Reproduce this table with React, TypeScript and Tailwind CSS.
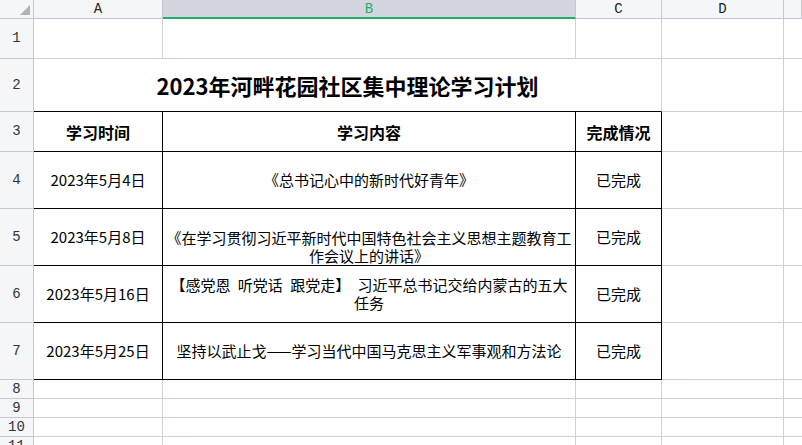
import React from 'react';

const grid = 'border-r border-b border-[#cdd1dc]';
const black = 'border-r border-b border-black';

const colHeads = ['A', 'B', 'C', 'D', ''];

function RowHead({ n }: { n: number }) {
  return (
    <div className="flex items-center justify-center border-r border-b border-[#c4c8d4] bg-[#f5f6f8] text-[14px] text-[#333] [font-family:'Liberation_Mono',monospace]">
      {n}
    </div>
  );
}

function Cell({ children, className = '' }: { children?: React.ReactNode; className?: string }) {
  return (
    <div className={`flex items-center justify-center text-center ${black} ${className}`}>{children}</div>
  );
}

const rows = [
  { date: '2023年5月4日', content: ['《总书记心中的新时代好青年》'] },
  {
    date: '2023年5月8日',
    content: ['《在学习贯彻习近平新时代中国特色社会主义思想主题教育工', '作会议上的讲话》'],
    pad: 'pt-[19px]',
  },
  { date: '2023年5月16日', content: ['【感党恩 听党话 跟党走】 习近平总书记交给内蒙古的五大', '任务'] },
  { date: '2023年5月25日', content: ['坚持以武止戈——学习当代中国马克思主义军事观和方法论'] },
];

export default function App() {
  return (
    <div className="h-[445px] w-[802px] overflow-hidden bg-white text-black [font-family:'Noto_Sans_CJK_SC','Noto_Sans',sans-serif]">
      <div className="grid grid-cols-[34px_129px_413px_86px_122px_1fr] grid-rows-[19px_40px_53px_40px_57px_57px_57px_57px_19px_19px_19px_19px]">
        {/* corner */}
        <div className="flex items-start justify-end border-r border-b border-[#c4c8d4] bg-[#f5f6f8] pt-[5px] pr-[3px]">
          <svg width="10" height="10" viewBox="0 0 10 10">
            <polygon points="10,0 10,10 0,10" fill="#b3b3b3" />
          </svg>
        </div>
        {colHeads.map((c) =>
          c === 'B' ? (
            <div
              key={c}
              className="flex items-center justify-center border-r border-b-2 border-r-[#c4c8d4] border-b-[#1fae6c] bg-[#d3d6de] pt-[1px] text-[14px] text-[#1fae6c] [font-family:'Liberation_Mono',monospace]"
            >
              {c}
            </div>
          ) : (
            <div
              key={c || 'e'}
              className="flex items-center justify-center border-r border-b border-[#c4c8d4] bg-[#f5f6f8] text-[14px] text-[#222] [font-family:'Liberation_Mono',monospace]"
            >
              {c}
            </div>
          )
        )}

        {/* row 1 */}
        <RowHead n={1} />
        <div className={grid} />
        <div className={grid} />
        <div className={grid} />
        <div className={grid} />
        <div className="border-b border-[#cdd1dc]" />

        {/* row 2 title */}
        <RowHead n={2} />
        <div className="col-span-3 flex items-center justify-center border-r border-r-[#cdd1dc] border-b border-b-black text-[22px] font-bold">
          2023年河畔花园社区集中理论学习计划
        </div>
        <div className={grid} />
        <div className="border-b border-[#cdd1dc]" />

        {/* row 3 header */}
        <RowHead n={3} />
        <Cell className="text-[16px] font-bold">学习时间</Cell>
        <Cell className="text-[16px] font-bold">学习内容</Cell>
        <Cell className="text-[16px] font-bold">完成情况</Cell>
        <div className={grid} />
        <div className="border-b border-[#cdd1dc]" />

        {rows.map((r, i) => (
          <React.Fragment key={r.date}>
            <RowHead n={i + 4} />
            <Cell className="text-[15px]">{r.date}</Cell>
            <div className={`flex flex-col items-center justify-center text-center text-[15px] leading-[18px] ${black} ${r.pad ?? ''}`}>
              {r.content.map((l) => (
                <span key={l} className="whitespace-pre [word-spacing:4px]">
                  {l}
                </span>
              ))}
            </div>
            <Cell className="text-[15px]">已完成</Cell>
            <div className={grid} />
            <div className="border-b border-[#cdd1dc]" />
          </React.Fragment>
        ))}

        {[8, 9, 10, 11].map((n) => (
          <React.Fragment key={n}>
            <RowHead n={n} />
            <div className={grid} />
            <div className={grid} />
            <div className={grid} />
            <div className={grid} />
            <div className="border-b border-[#cdd1dc]" />
          </React.Fragment>
        ))}
      </div>
    </div>
  );
}
